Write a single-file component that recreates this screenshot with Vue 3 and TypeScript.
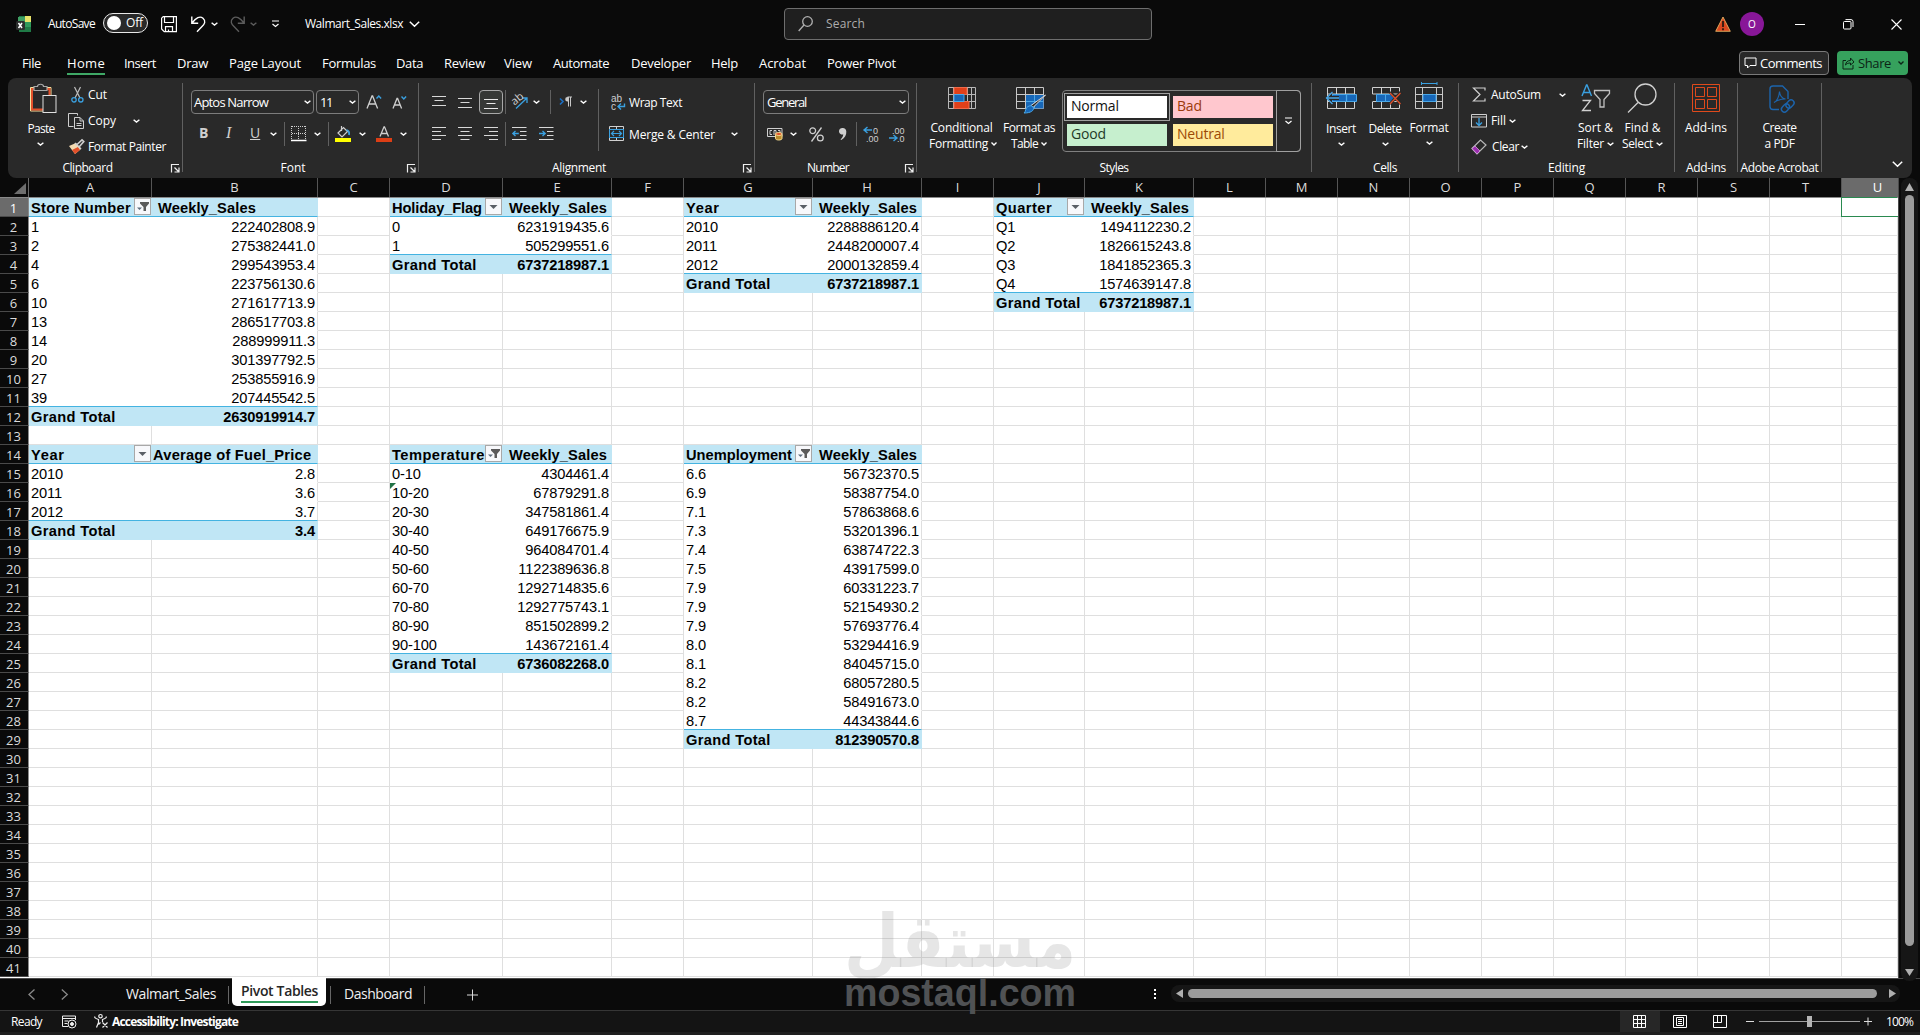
<script setup lang="ts">
import { h } from 'vue'

/* Spreads the letters of an element so that its text takes the given width. */
const vFit = {
  mounted(el: HTMLElement, binding: { value: number }) {
    const range = document.createRange()
    range.selectNodeContents(el)
    const natural = range.getBoundingClientRect().width
    const count = (el.textContent || '').length
    el.style.letterSpacing = `${(binding.value + 1 - natural) / count}px`
    el.style.width = `${binding.value + 1}px`
  },
}

const Chev = (props: { w?: number; c?: string }) => {
  const w = props.w ?? 7
  const d = w > 8 ? 'M.8 .8 5.5 5.3 10.2 .8' : w < 7 ? 'M.5 .6 3 3 5.5 .6' : 'M.6 .7 3.5 3.1 6.4 .7'
  return h('svg', { width: w > 8 ? 11 : w, height: w > 8 ? 7 : 4, style: 'display:block' }, [
    h('path', { d, fill: 'none', stroke: props.c ?? '#fff', 'stroke-width': w > 8 ? 1.5 : 1.4 }),
  ])
}
Chev.props = ['w', 'c']

const Launch = () =>
  h('svg', { width: 15, height: 9, style: 'display:block' }, [
    h('path', { d: 'M4.500 8.500V.5H12M7.500 3.500 11.500 7.500M12 3.500V8H7.500', fill: 'none', stroke: '#eee', 'stroke-width': 1.2 }),
  ])

const menu: [string, number, number][] = [
  ['File', 45, 18], ['Home', 57, 37], ['Insert', 53, 31], ['Draw', 52, 30], ['Page Layout', 93, 71],
  ['Formulas', 74, 53], ['Data', 48, 26], ['Review', 60, 40], ['View', 49, 27], ['Automate', 78, 55],
  ['Developer', 80, 59], ['Help', 48, 26], ['Acrobat', 68, 46], ['Power Pivot', 80, 68],
]

const colWidths = [123, 166, 72, 113, 109, 72, 129, 109, 72, 91, 109, 72, 72, 72, 72, 72, 72, 72, 72, 72, 56]
const cols = colWidths.map((w, i) => ({ w, name: String.fromCharCode(65 + i) }))

interface Pivot {
  col: number
  row: number
  head: string
  headW: number
  value: string
  valueW: number
  filtered: boolean
  rows: [string, string][]
  total: string
}
const WS = 'Weekly_Sales'
const pivots: Pivot[] = [
  { col: 0, row: 1, head: 'Store Number', headW: 97, value: WS, valueW: 95, filtered: true, total: '2630919914.7',
    rows: [['1', '222402808.9'], ['2', '275382441.0'], ['4', '299543953.4'], ['6', '223756130.6'], ['10', '271617713.9'],
      ['13', '286517703.8'], ['14', '288999911.3'], ['20', '301397792.5'], ['27', '253855916.9'], ['39', '207445542.5']] },
  { col: 3, row: 1, head: 'Holiday_Flag', headW: 87, value: WS, valueW: 95, filtered: false, total: '6737218987.1',
    rows: [['0', '6231919435.6'], ['1', '505299551.6']] },
  { col: 6, row: 1, head: 'Year', headW: 32, value: WS, valueW: 95, filtered: false, total: '6737218987.1',
    rows: [['2010', '2288886120.4'], ['2011', '2448200007.4'], ['2012', '2000132859.4']] },
  { col: 9, row: 1, head: 'Quarter', headW: 54, value: WS, valueW: 95, filtered: false, total: '6737218987.1',
    rows: [['Q1', '1494112230.2'], ['Q2', '1826615243.8'], ['Q3', '1841852365.3'], ['Q4', '1574639147.8']] },
  { col: 0, row: 14, head: 'Year', headW: 32, value: 'Average of Fuel_Price', valueW: 154, filtered: false, total: '3.4',
    rows: [['2010', '2.8'], ['2011', '3.6'], ['2012', '3.7']] },
  { col: 3, row: 14, head: 'Temperature', headW: 90, value: WS, valueW: 95, filtered: true, total: '6736082268.0',
    rows: [['0-10', '4304461.4'], ['10-20', '67879291.8'], ['20-30', '347581861.4'], ['30-40', '649176675.9'],
      ['40-50', '964084701.4'], ['50-60', '1122389636.8'], ['60-70', '1292714835.6'], ['70-80', '1292775743.1'],
      ['80-90', '851502899.2'], ['90-100', '143672161.4']] },
  { col: 6, row: 14, head: 'Unemployment', headW: 103, value: WS, valueW: 95, filtered: true, total: '812390570.8',
    rows: [['6.6', '56732370.5'], ['6.9', '58387754.0'], ['7.1', '57863868.6'], ['7.3', '53201396.1'], ['7.4', '63874722.3'],
      ['7.5', '43917599.0'], ['7.9', '60331223.7'], ['7.9', '52154930.2'], ['7.9', '57693776.4'], ['8.0', '53294416.9'],
      ['8.1', '84045715.0'], ['8.2', '68057280.5'], ['8.2', '58491673.0'], ['8.7', '44343844.6']] },
]

interface Cell { text: string; cls: string; fit?: number; button?: 'drop' | 'filter' }
const cells = new Map<string, Cell>()
for (const p of pivots) {
  cells.set(`${p.row}:${p.col}`, { text: p.head, cls: 'pv head', fit: p.headW, button: p.filtered ? 'filter' : 'drop' })
  cells.set(`${p.row}:${p.col + 1}`, { text: p.value, cls: p.value === WS ? 'pv head last value' : 'pv head last average', fit: p.valueW })
  p.rows.forEach(([a, b], i) => {
    const r = p.row + 1 + i
    const end = i === p.rows.length - 1 ? ' end' : ''
    const flag = a === '10-20' ? ' flag' : ''
    cells.set(`${r}:${p.col}`, { text: a, cls: 'pv' + end + flag })
    cells.set(`${r}:${p.col + 1}`, { text: b, cls: 'pv last num' + end })
  })
  const t = p.row + 1 + p.rows.length
  cells.set(`${t}:${p.col}`, { text: 'Grand Total', cls: 'pv total', fit: 82 })
  cells.set(`${t}:${p.col + 1}`, { text: p.total, cls: 'pv total last num' })
}
const at = (r: number, c: number) => cells.get(`${r}:${c}`)
</script>

<template>
  <div class="app">
    <header class="title">
      <svg width="17" height="17" viewBox="0 0 17 17">
        <path d="M3 0h12v16H3z" fill="#1f7a46" /><path d="M2 1h7v7H2z" fill="#3f9e63" /><path d="M9 0h6v6H9z" fill="#e8e36a" />
        <path d="M9 6h6v5H9z" fill="#2f9a5c" /><rect y="5" width="9" height="9" rx="1.5" fill="#2c2f2e" />
        <path d="M2.5 7 6 12M6 7 2.5 12" stroke="#fff" stroke-width="1.5" />
      </svg>
      <span v-fit="46" class="t s12">AutoSave</span>
      <div class="toggle"><i></i><span v-fit="16" class="t s12">Off</span></div>
      <svg width="17" height="17" fill="none" stroke="#fff" stroke-width="1.2"><path d="M.6 2.2.6 13l2.6 2.6h12.2V.6H2.2zM3.5.6v5.9h9V.6M4.5 15.6v-5h7v5M7.5 15.6v-2" /></svg>
      <svg width="16" height="17" fill="none" stroke="#fff" stroke-width="1.4"><path d="M.8.5v6.8h6.4M1 7C5 1.5 9-.3 12 2.2c3.4 3 1.4 6-1 8.4L6 15.8" /></svg>
      <Chev />
      <svg width="16" height="17" fill="none" stroke="#5c5c5c" stroke-width="1.4"><path d="M14.2.5v6.8H7.8M14 7C10 1.5 6-.3 3 2.2-.4 5.2 1.6 8.2 4 10.6l5 5.2" /></svg>
      <Chev c="#5c5c5c" />
      <svg width="9" height="8" fill="none" stroke="#fff" stroke-width="1.2"><path d="M1 1h7M1.5 4 4.5 6.5 7.5 4" /></svg>
      <span v-fit="97" class="t s12">Walmart_Sales.xlsx</span>
      <Chev :w="11" />
      <div class="search">
        <svg width="16" height="17" fill="none" stroke="#b0b0b0" stroke-width="1.3"><circle cx="9.5" cy="5.5" r="4.8" /><path d="M6 9 .7 15" /></svg>
        <span v-fit="38" class="t s12">Search</span>
      </div>
      <svg width="16" height="16"><path d="M8 1 15.3 15.3H.7z" fill="#d8481f" stroke="#f6c06a" stroke-width=".8" /><path d="M8 5v6M8 12.3v2" stroke="#2a1a10" stroke-width="1.8" /></svg>
      <div class="avatar">O</div>
      <svg width="11" height="11"><path d="M0 5.5h10" stroke="#fff" /></svg>
      <svg width="11" height="11" fill="none" stroke="#fff"><rect x=".5" y="2.5" width="7.5" height="7.5" rx="1" /><path d="M2.5 .6H8a2 2 0 0 1 2 2V8" /></svg>
      <svg width="11" height="11"><path d="M.5.5l10 10M10.5.5l-10 10" stroke="#fff" stroke-width="1.1" /></svg>
    </header>

    <nav class="menu">
      <div v-for="m in menu" :key="m[0]" class="mi" :class="{ on: m[0] === 'Home' }" :style="{ width: m[1] + 'px' }">
        <span v-fit="m[2]" class="t">{{ m[0] }}</span>
      </div>
      <div class="grow"></div>
      <button class="comments">
        <svg width="13" height="12" fill="none" stroke="#fff"><path d="M1 1h11v7.5H6L3.5 11V8.5H1z" /></svg>
        <span v-fit="61" class="t">Comments</span>
      </button>
      <button class="share">
        <svg width="13" height="13" fill="none" stroke="#0c2416"><path d="M4 3.500H1v8.500h10V8M3.500 8c.5-3 2-4.500 5-4.500V1l3.500 4-3.500 3V6C6 6 5 6.500 3.500 8z" /></svg>
        <span v-fit="32" class="t">Share</span>
        <Chev :w="6" c="#0c2416" />
      </button>
    </nav>

    <section class="ribbon">
      <!-- Clipboard -->
      <div class="group g-clip">
        <div class="body">
          <div class="big paste">
            <svg width="29" height="32" fill="none">
              <path d="M1.500 4.500h20.500v23.500H1.500z" stroke="#f7e3a0" /><path d="M3 6h17.500v20.500H3z" stroke="#e2502a" stroke-width="2" />
              <path d="M5 3.500h3.500c0-3 6-3 6 0H18v4H5z" fill="#292929" stroke="#a8a8a8" stroke-width="1.200" />
              <rect x="14" y="12.500" width="13" height="17" fill="#292929" stroke="#e0e0e0" />
            </svg>
            <span v-fit="26" class="t s12">Paste</span><Chev />
          </div>
          <div class="list">
            <div class="row26 cut">
              <svg width="13" height="16" fill="none"><path d="M3.500 0 9 11M9.500 0 4 11" stroke="#bdbdbd" stroke-width="1.200" /><circle cx="3" cy="12.800" r="2.200" stroke="#3aa0e0" stroke-width="1.300" /><circle cx="9.800" cy="12.800" r="2.200" stroke="#3aa0e0" stroke-width="1.300" /></svg>
              <span v-fit="18" class="t s12">Cut</span>
            </div>
            <div class="row26 copy">
              <svg width="17" height="17" fill="none" stroke="#d0d0d0"><path d="M5.500 13.500H.5V.5H9.500v2" /><path d="M6.500 4.500h5.500l3.500 3.500v7.500h-9zM12 4.500V8h3.500M8.500 10.500h5M8.500 12.500h5" /></svg>
              <span v-fit="27" class="t s12">Copy</span><Chev />
            </div>
            <div class="row26 copy">
              <svg width="17" height="16" fill="none"><path d="M1 7 8 4l5 6-6 5z" fill="#f3d9b0" /><path d="M4 11l6-3 2 3-5 4z" fill="#e2502a" /><path d="M7 4l6 6M8.500 6 14 .8l1.800 1.800L11 8" stroke="#cfcfcf" stroke-width="1.600" /></svg>
              <span v-fit="77" class="t s12">Format Painter</span>
            </div>
          </div>
        </div>
        <div class="cap"><span v-fit="49" class="t s12">Clipboard</span><Launch /></div>
      </div>
      <div class="sep"></div>

      <!-- Font -->
      <div class="group g-font">
        <div class="body col">
          <div class="row32 font1">
            <div class="box"><span v-fit="73" class="t">Aptos Narrow</span><Chev /></div>
            <div class="box"><span v-fit="11" class="t">11</span><Chev /></div>
            <svg width="16" height="16" fill="none"><path d="M1 14.500 6 2h.6l5 12.500M2.800 10h7" stroke="#cfcfcf" stroke-width="1.300" /><path d="M10.500 4.500 12.800 2l2.300 2.500" stroke="#3aa0e0" stroke-width="1.400" /></svg>
            <svg width="16" height="16" fill="none"><path d="M1 14.500 5 4.500h.6l4 10M2.500 11h5.600" stroke="#cfcfcf" stroke-width="1.300" /><path d="M9.500 2.500 11.800 5l2.300-2.500" stroke="#3aa0e0" stroke-width="1.400" /></svg>
          </div>
          <div class="row32 font2">
            <b class="bi">B</b><i class="bi it">I</i><u class="bi un">U</u><Chev />
            <div class="vs"></div>
            <svg width="16" height="16" fill="none" stroke="#d0d0d0"><path d="M1 .5h14M1 7.500h14M.5 0v14M7.500 0v14M14.500 0v14" stroke-dasharray="1 1" /><path d="M0 14.500h15.500" stroke="#fff" stroke-width="1.500" /></svg>
            <Chev />
            <div class="vs"></div>
            <svg width="17" height="17" fill="none"><path d="M3 7 8.500 1.500l4 4L7 11zM6.500 0v5" stroke="#cfcfcf" stroke-width="1.200" /><path d="M11.500 4c2 .5 3 2.500 2.500 5" stroke="#3aa0e0" stroke-width="1.800" /><path d="M0 12h16v4H0z" fill="#ffff00" /></svg>
            <Chev />
            <svg width="17" height="17" fill="none"><path d="M4 10.500 8 .8h.5l4 9.700M5.300 7.500h6" stroke="#cfcfcf" stroke-width="1.300" /><path d="M0 12h16v4H0z" fill="#dc3e15" /></svg>
            <Chev />
          </div>
        </div>
        <div class="cap"><span v-fit="24" class="t s12">Font</span><Launch /></div>
      </div>
      <div class="sep"></div>

      <!-- Alignment -->
      <div class="group g-align">
        <div class="body">
          <div class="alcol">
            <div class="row32 al1">
              <svg width="15" height="13" stroke="#d8d8d8"><path d="M0 .5h14M2.500 4.500h9M0 9.500h14" /></svg>
              <svg width="15" height="13" stroke="#d8d8d8"><path d="M0 2.500h14M2.500 6.500h9M0 11.500h14" /></svg>
              <div class="pressed"><svg width="15" height="13" stroke="#e8e8e8"><path d="M0 3.500h14M2.500 7.500h9M0 12.500h14" /></svg></div>
              <div class="vs"></div>
              <svg width="18" height="17" fill="none"><path d="M4 14.500 14.500 4.500M10 4h5v5" stroke="#3aa0e0" stroke-width="1.300" /><text x="0" y="9" transform="rotate(-40 5 7)" fill="#cfcfcf" font-family="Open Sans, sans-serif" font-size="11">ab</text></svg>
              <Chev />
              <div class="vs"></div>
              <svg width="14" height="12" fill="none"><path d="M1 2.500 4 5.500 1 8.500" stroke="#1b6fc4" stroke-width="1.600" /><path d="M9.500 10.500V1M11.500 10.500V1M13 1H8.500" stroke="#c8c8c8" /><path d="M9.500 1H8.500a2.300 2.300 0 0 0 0 4.600h1z" fill="#c8c8c8" /></svg>
              <Chev />
            </div>
            <div class="row32 al2">
              <svg width="15" height="14" stroke="#d8d8d8"><path d="M0 .5h14M0 4.500h9M0 8.500h14M0 12.500h9" /></svg>
              <svg width="15" height="14" stroke="#d8d8d8"><path d="M0 .5h14M2.500 4.500h9M0 8.500h14M2.500 12.500h9" /></svg>
              <svg width="15" height="14" stroke="#d8d8d8"><path d="M0 .5h14M5 4.500h9M0 8.500h14M5 12.500h9" /></svg>
              <div class="vs"></div>
              <svg width="16" height="14" fill="none" stroke="#d8d8d8"><path d="M0 .5h14.500M8 4.500h6.500M8 8.500h6.500M0 12.500h14.500" /><path d="M.8 6.500h6M3.500 4 .8 6.500l2.700 2.500" stroke="#3aa0e0" stroke-width="1.300" /></svg>
              <svg width="16" height="14" fill="none" stroke="#d8d8d8"><path d="M0 .5h14.500M8 4.500h6.500M8 8.500h6.500M0 12.500h14.500" /><path d="M0 6.500h6M3.500 4 6.200 6.500 3.500 9" stroke="#3aa0e0" stroke-width="1.300" /></svg>
            </div>
          </div>
          <div class="tallsep"></div>
          <div class="alcol">
            <div class="row32 wrap">
              <svg class="wr" width="16" height="17" fill="none"><text x="0" y="7.500" fill="#cfcfcf" font-family="Liberation Sans, sans-serif" font-size="10">ab</text><text x="0" y="16" fill="#cfcfcf" font-family="Liberation Sans, sans-serif" font-size="10">c</text><path d="M13.500 9.500v3H7.500M10 9.500 7 12.500l3 3" stroke="#3aa0e0" stroke-width="1.400" /></svg>
              <span v-fit="52" class="t s12">Wrap Text</span>
            </div>
            <div class="row32 wrap">
              <svg width="16" height="16" fill="none"><path d="M.5.5h14v14H.5zM7.500 0v4M7.500 11v4" stroke="#d0d0d0" /><rect x=".5" y="3.500" width="14" height="8" stroke="#3aa0e0" fill="#292929" /><path d="M2.500 7.500h10M5 5 2.500 7.500 5 10M10 5l2.500 2.500L10 10" stroke="#3aa0e0" stroke-width="1.200" /></svg>
              <span v-fit="85" class="t s12">Merge &amp; Center</span><Chev />
            </div>
          </div>
        </div>
        <div class="cap"><span v-fit="53" class="t s12">Alignment</span><Launch /></div>
      </div>
      <div class="sep"></div>

      <!-- Number -->
      <div class="group g-num">
        <div class="body col">
          <div class="row32"><div class="box gen"><span v-fit="38" class="t">General</span><Chev /></div></div>
          <div class="row32 num2">
            <svg width="17" height="14" fill="none"><path d="M.5 1.500h14.500v8H.5z" stroke="#cfcfcf" /><path d="M5 3.500H3v4h2M7 8V3.500h2V8M11 3.500h2V6" stroke="#cfcfcf" /><path d="M8.500 7.500v4c0 2 6.500 2 6.500 0v-4" fill="#b98a2c" stroke="#f5dd90" /><ellipse cx="11.800" cy="7" rx="3.300" ry="1.500" fill="#e2502a" stroke="#f5dd90" /></svg>
            <Chev />
            <svg width="16" height="15" fill="none" stroke="#cfcfcf" stroke-width="1.300"><circle cx="3.700" cy="3.700" r="2.900" /><circle cx="11.300" cy="11" r="2.900" /><path d="M12.500.5 2.500 14.500" /></svg>
            <svg width="9" height="14"><path d="M3.800 1A3.300 3.300 0 1 0 4.300 7.400C4 9.500 3 11 1.500 12.300L2.300 13C6 10.800 7.500 8 7.300 4.500 7.200 2.300 5.800 1 3.800 1z" fill="#cfcfcf" /></svg>
            <div class="vs"></div>
            <svg width="17" height="16" fill="none"><path d="M1 4h8M4.500 1 1 4l3.500 3" stroke="#3aa0e0" stroke-width="1.400" /><text x="10" y="7.500" class="dec">0</text><text x="3" y="15.500" class="dec">.00</text></svg>
            <svg width="17" height="16" fill="none"><path d="M0 12h8M4.500 9 8 12l-3.500 3" stroke="#3aa0e0" stroke-width="1.400" /><text x="3" y="7.500" class="dec">.00</text><text x="8" y="15.500" class="dec">.0</text></svg>
          </div>
        </div>
        <div class="cap"><span v-fit="41" class="t s12">Number</span><Launch /></div>
      </div>
      <div class="sep"></div>

      <!-- Styles -->
      <div class="group g-styles">
        <div class="body">
          <div class="big cond">
            <svg width="28" height="28" fill="none"><path d="M.5 5.500h27v21H.5zM0 12.500h28M0 19.500h28M5.500 5v22M19.500 5v22M23.500 5v22" stroke="#b8b8b8" /><path d="M6 5.500h13v7H6zM6 19.500h15v7H6z" fill="#e0401a" stroke="#f06a4a" /><path d="M6 12.500h10v7H6z" fill="#1767b8" stroke="#4aa8e8" /></svg>
            <span v-fit="61" class="t s12">Conditional</span>
            <div class="l2"><span v-fit="58" class="t s12">Formatting</span><Chev :w="6" /></div>
          </div>
          <div class="big fat">
            <svg width="31" height="34" fill="none"><path d="M.5 5.500h27v21H.5zM0 12.500h28M0 19.500h28M9.500 5v22M18.500 5v22" stroke="#c8c8c8" /><path d="M10 13h17.500v13.500H10z" fill="#1767b8" /><path d="M10 19.500h17M18.500 13v13" stroke="#4aa8e8" /><path d="M29.500 13 17 25.500l-2-2z" fill="#292929" stroke="#d8d8d8" /><path d="M16 24c3 2 2 7-8 7 2-1 1-5 4-6.500 1.500-.8 3-.8 4-.5z" fill="#1767b8" stroke="#4aa8e8" /></svg>
            <span v-fit="51" class="t s12">Format as</span>
            <div class="l2"><span v-fit="26" class="t s12">Table</span><Chev :w="6" /></div>
          </div>
          <div class="gallery">
            <div class="sw-grid">
              <div class="sel"><div class="sw normal">Normal</div></div>
              <div class="sw bad">Bad</div>
              <div class="sw good">Good</div>
              <div class="sw neutral">Neutral</div>
            </div>
            <div class="more"><svg width="9" height="8" fill="none" stroke="#fff" stroke-width="1.200"><path d="M1 1h7M1.500 4 4.500 6.500 7.500 4" /></svg></div>
          </div>
        </div>
        <div class="cap"><span v-fit="28" class="t s12">Styles</span></div>
      </div>
      <div class="sep"></div>

      <!-- Cells -->
      <div class="group g-cells">
        <div class="body">
          <div class="big ins">
            <svg width="33" height="28" fill="none"><path d="M2.500 5.500h27v21h-27zM2 12h28M2 19.500h28M11.500 5v22M20.500 5v22" stroke="#d0d0d0" /><path d="M7 12.500h24.500v7H7z" fill="#1767b8" stroke="#4aa8e8" /><path d="M14 14H7v-4L.8 16 7 22v-4h7" fill="#292929" /><path d="M14 16H1.500M7.500 10 1.500 16l6 6M21.500 13v7" stroke="#4aa8e8" stroke-width="1.300" /></svg>
            <span v-fit="29" class="t s12">Insert</span><Chev />
          </div>
          <div class="big del">
            <svg width="31" height="28" fill="none"><path d="M2.500 12V5.500h27V12M2.500 20v6.500h27V20M11.500 5v7M20.500 5v7M11.500 20v7M20.500 20v7M2.500 12h27M2.500 19.500h27" stroke="#d0d0d0" /><path d="M6.500 12.500h14l4 3.500-4 3.500h-14z" fill="#1767b8" stroke="#4aa8e8" /><path d="M15.500 12v8" stroke="#4aa8e8" /><path d="M20 10l11 12M31 10 20 22" stroke="#292929" stroke-width="3" /><path d="M20 11l10.500 11M30.500 11 20 22" stroke="#e0502a" stroke-width="1.300" /></svg>
            <span v-fit="32" class="t s12">Delete</span><Chev />
          </div>
          <div class="big fmt">
            <svg width="29" height="28" fill="none"><path d="M.5 5.500h27v21H.5zM0 12.500h28M0 19.500h28M7.500 5v22M21.500 5v22" stroke="#c8c8c8" /><path d="M8 12.500h13v7H8z" fill="#1767b8" stroke="#4aa8e8" /><path d="M6.500 0v3M22 0v3M6.500 1.500H22" stroke="#3aa0e0" /></svg>
            <span v-fit="38" class="t s12">Format</span><Chev />
          </div>
        </div>
        <div class="cap"><span v-fit="23" class="t s12">Cells</span></div>
      </div>
      <div class="sep"></div>

      <!-- Editing -->
      <div class="group g-edit">
        <div class="body">
          <div class="list ed">
            <div class="row26 e1">
              <svg width="16" height="16" fill="none" stroke="#cfcfcf" stroke-width="1.200"><path d="M14 3.500V1H2.500L9 7.500 2.500 14H14v-2.500" /></svg>
              <span v-fit="49" class="t s12">AutoSum</span><Chev />
            </div>
            <div class="row26 e2">
              <svg width="16" height="14" fill="none"><path d="M.5 13V.5h15V13zM.5 3h15" stroke="#cfcfcf" /><path d="M8 4v7M5 8.500l3 3 3-3" stroke="#3aa0e0" stroke-width="1.300" /></svg>
              <span v-fit="14" class="t s12">Fill</span><Chev />
            </div>
            <div class="row26 e3">
              <svg width="16" height="16" fill="none"><path d="M1 9.500 9.500 1 15 6 6 15z" stroke="#b8b8b8" stroke-width="1.200" /><path d="M1 9.500 4 7l5 5-3 3z" fill="#9c2fb0" stroke="#d0a0d8" stroke-width=".8" /></svg>
              <span v-fit="26" class="t s12">Clear</span><Chev />
            </div>
          </div>
          <div class="big sort">
            <svg width="30" height="32" fill="none"><path d="M1 14 5.500 3h.5l4.500 11M2.500 10.500h6.500" stroke="#3aa0e0" stroke-width="1.400" /><path d="M1.500 18.500h8L1.500 28.500h8.500" stroke="#d0d0d0" stroke-width="1.300" /><path d="M13.500 8.500h15v3l-5.500 6v7.500h-4V17.500l-5.500-6z" stroke="#c0c0c0" stroke-width="1.300" /></svg>
            <span v-fit="34" class="t s12">Sort &amp;</span>
            <div class="l2"><span v-fit="26" class="t s12">Filter</span><Chev /></div>
          </div>
          <div class="big find">
            <svg width="31" height="32" fill="none" stroke="#d0d0d0" stroke-width="1.300"><circle cx="18.500" cy="12.500" r="10.500" /><path d="M11 20.500 1 30.500" /></svg>
            <span v-fit="35" class="t s12">Find &amp;</span>
            <div class="l2"><span v-fit="30" class="t s12">Select</span><Chev /></div>
          </div>
        </div>
        <div class="cap"><span v-fit="36" class="t s12">Editing</span></div>
      </div>
      <div class="sep"></div>

      <!-- Add-ins -->
      <div class="group g-add">
        <div class="body">
          <div class="big">
            <svg width="28" height="32" fill="none" stroke="#e04a1c"><path d="M.5 2.500h27v27H.5zM3.500 5.500h9v9h-9zM15.500 5.500h9v9h-9zM3.500 17.500h9v9h-9zM15.500 17.500h9v9h-9z" /></svg>
            <span v-fit="41" class="t s12">Add-ins</span>
          </div>
        </div>
        <div class="cap"><span v-fit="39" class="t s12">Add-ins</span></div>
      </div>
      <div class="sep"></div>

      <!-- Adobe Acrobat -->
      <div class="group g-pdf">
        <div class="body">
          <div class="big">
            <svg class="pdf" width="26" height="34" fill="none" stroke="#1c64ac" stroke-width="1.400"><path d="M10 27.500H4a3 3 0 0 1-3-3V7a3 3 0 0 1 3-3h9.500L19 9.500V17M13.500 4l5.500 5.500" /><path d="M5 20.500c3-1.500 5-6 5.500-11 .5 5 3 7 6 7.500-4 0-8 1-11.500 3.500z" stroke-width="1.100" /><rect x="18" y="17.500" width="6" height="9" rx="3" transform="rotate(45 21 22)" /><rect x="13.500" y="21.500" width="6" height="9" rx="3" transform="rotate(45 16.500 26)" /></svg>
            <span v-fit="33" class="t s12">Create</span>
            <span v-fit="29" class="t s12">a PDF</span>
          </div>
        </div>
        <div class="cap"><span v-fit="77" class="t s12">Adobe Acrobat</span></div>
      </div>
      <div class="sep"></div>
      <div class="collapse"><Chev :w="11" /></div>
    </section>

    <main class="work">
      <div class="sheet">
        <div class="colhead">
          <div class="corner"><svg width="12" height="11"><path d="M12 0v11H0z" fill="#6e6e6e" /></svg></div>
          <div v-for="c in cols" :key="c.name" class="ch" :class="{ on: c.name === 'U' }" :style="{ width: c.w + 'px' }"><span>{{ c.name }}</span></div>
        </div>
        <div v-for="r in 41" :key="r" class="line">
          <div class="rh" :class="{ on: r === 1 }">{{ r }}</div>
          <div v-for="(c, i) in cols" :key="c.name" class="cell" :class="[at(r, i)?.cls, { active: r === 1 && i === 20 }]" :style="{ width: c.w + 'px' }">
            <template v-if="at(r, i)">
              <span v-if="at(r, i)!.fit" v-fit="at(r, i)!.fit!">{{ at(r, i)!.text }}</span>
              <span v-else>{{ at(r, i)!.text }}</span>
              <div v-if="at(r, i)!.button" class="fb">
                <svg v-if="at(r, i)!.button === 'drop'" width="15" height="15"><path d="M3.500 6h8l-4 4z" fill="#5a5f66" /></svg>
                <svg v-else width="15" height="15"><path d="M5 3h9v1.500L11 8v4H8.500V8L5 4.500z" fill="#5a5a5a" /><path d="M2 8.500h5L4.500 11z" fill="#5d6b7c" /></svg>
              </div>
            </template>
          </div>
        </div>
      </div>
      <div class="vbar">
        <div class="vtrack">
          <svg width="9" height="8"><path d="M4.500 0 9 8H0z" fill="#b0b0b0" /></svg>
          <div class="vthumb"></div>
          <svg width="9" height="7"><path d="M0 0h9L4.500 7z" fill="#b0b0b0" /></svg>
        </div>
      </div>
    </main>

    <div class="tabs">
      <svg width="8" height="11"><path d="M6.500.5 1 5.500l5.500 5" fill="none" stroke="#8a8a8a" stroke-width="1.300" /></svg>
      <svg width="8" height="11"><path d="M.8.5l5.500 5-5.500 5" fill="none" stroke="#8a8a8a" stroke-width="1.300" /></svg>
      <span v-fit="89" class="t s14">Walmart_Sales</span>
      <i class="ts"></i>
      <div class="tab"><span v-fit="76" class="t s14">Pivot Tables</span></div>
      <i class="ts"></i>
      <span v-fit="67" class="t s14">Dashboard</span>
      <i class="ts"></i>
      <svg width="12" height="12"><path d="M5.500.5v11M0 6h11" stroke="#d8d8d8" /></svg>
      <svg width="3" height="11" fill="#fff"><path d="M0 0h2v2H0zM0 4h2v2H0zM0 8h2v2H0z" /></svg>
      <div class="hbar">
        <svg width="7" height="9"><path d="M7 0v9L0 4.500z" fill="#b0b0b0" /></svg>
        <div class="hthumb"></div>
        <svg width="7" height="9"><path d="M0 0v9l7-4.500z" fill="#b0b0b0" /></svg>
      </div>
    </div>

    <footer class="status">
      <span v-fit="30" class="t s12">Ready</span>
      <svg width="16" height="14" fill="none" stroke="#eee"><path d="M6 11.500H.5V1h13v4M.5 3.500h13M2.500 6h4M2.500 8.500h3" /><circle cx="10" cy="9" r="4" /><circle cx="10" cy="9" r="1.500" fill="#eee" /></svg>
      <svg width="15" height="15" fill="none" stroke="#eee" stroke-width="1.200"><circle cx="6.500" cy="2.200" r="1.700" /><path d="M1 2.500c-.8 1 0 1.600 3.500 3v3L2.500 13.500M12 2.500c.8 1 0 1.600-3.500 3V8M4.500 10.500l2-2M8.500 8.500l5 5M13.500 8.500l-5 5" /></svg>
      <span v-fit="125" class="t s12 bold">Accessibility: Investigate</span>
      <div class="view"><svg width="14" height="14" fill="none" stroke="#fff"><path d="M.5.500h12v12H.5zM4.500 0v13M8.500 0v13M0 4.500h13M0 8.500h13" /></svg></div>
      <svg width="14" height="14" fill="none" stroke="#fff"><path d="M.5.500h13v12H.5zM3.500 2.500h7v8h-7zM5 4.500h4M5 6.500h4M5 8.500h4" /></svg>
      <svg width="14" height="14" fill="none" stroke="#fff"><path d="M.5.500h13v12H.5zM4.500 0v7.500M8.500 0v7.500H0" /></svg>
      <svg width="9" height="9"><path d="M0 4.500h8" stroke="#ddd" /></svg>
      <div class="slider"><i></i></div>
      <svg width="9" height="9"><path d="M0 4.500h8M4 .5v8" stroke="#ddd" /></svg>
      <span v-fit="26" class="t s12">100%</span>
    </footer>

    <svg class="mark" width="240" height="120" viewBox="0 0 240 120">
      <text x="3" y="67" class="mark-ar" textLength="232" lengthAdjust="spacingAndGlyphs" direction="rtl" text-anchor="end">مستقل</text>
      <text x="3" y="106" class="mark-en" textLength="232" lengthAdjust="spacingAndGlyphs">mostaql.com</text>
    </svg>
  </div>
</template>

<style>
html, body { background: #0a0a0a; overflow: hidden; }
</style>

<style scoped>
* { box-sizing: border-box; }
.app { position: relative; width: 1920px; height: 1035px; display: flex; flex-direction: column; overflow: hidden; background: #0a0a0a; color: #fff; font-family: 'Open Sans', 'Noto Sans', sans-serif; font-size: 13px; }
.app svg { display: block; flex: none; overflow: visible; }
.t { display: block; flex: none; white-space: nowrap; line-height: 16px; }
.s12 { font-size: 12px; }
.s14 { font-size: 14px; }
.bold { font-weight: 700; }
.grow { flex: 1; }

.title { height: 48px; display: grid; align-items: center; padding-left: 16px; grid-template-columns: 32px 55px 58px 30px 20px 19px 20px 21px 34px 104px 375px 931px 25px 55px 48px 48px 20px; }
.toggle { width: 45px; height: 20px; border: 1px solid #e8e8e8; border-radius: 10px; background: #292929; display: flex; align-items: center; padding-left: 3px; gap: 5px; margin-bottom: 2px; }
.toggle i { width: 14px; height: 14px; border-radius: 50%; background: #fff; flex: none; }
.search { width: 368px; height: 32px; border: 1px solid #6e6e6e; border-radius: 4px; background: #1f1f1f; display: grid; grid-template-columns: 28px 1fr; align-items: center; padding-left: 13px; color: #adadad; }
.avatar { width: 24px; height: 24px; border-radius: 50%; background: #881798; font-size: 10px; text-align: center; line-height: 24px; }

.menu { height: 30px; display: flex; padding-left: 22px; }
.mi { flex: none; height: 27px; display: flex; flex-direction: column; padding-top: 7px; }
.mi.on::after { content: ''; width: 38px; height: 2px; background: #3fa866; margin-top: 2px; }
.menu button { font: inherit; height: 24px; margin-top: 3px; border-radius: 4px; display: grid; align-items: center; text-align: left; }
.menu .comments { width: 90px; border: 1px solid #7a7a7a; background: #292929; color: #fff; grid-template-columns: 16px 1fr; padding: 0 0 0 4px; margin-right: 8px; }
.menu .share { width: 71px; border: 0; background: #36a15d; color: #0c2416; grid-template-columns: 16px 40px 1fr; padding: 0 0 0 5px; margin-right: 12px; }

.ribbon { flex: none; height: 100px; margin: 0 8px; background: #292929; border-radius: 8px; display: flex; }
.group { flex: none; display: flex; flex-direction: column; }
.sep { width: 1px; flex: none; margin: 5px 0 6px; background: #606060; }
.body { height: 82px; display: flex; padding-top: 4px; }
.body.col { flex-direction: column; }
.body.col, .alcol { padding-top: 8px; }
.alcol { margin-top: -4px; }
.cap { height: 16px; display: flex; }
.cap > .t { margin: 0 auto; }
.cap > svg { margin-top: 4px; }
.g-clip { width: 174px; }
.g-font { width: 235px; }
.g-align { width: 335px; }
.g-num { width: 161px; }
.g-styles { width: 394px; }
.g-cells { width: 146px; }
.g-edit { width: 215px; }
.g-add { width: 62px; }
.g-pdf { width: 83px; }
.row26 { height: 26px; display: grid; align-items: center; }
.row32 { height: 32px; display: grid; align-items: center; }
.big { display: flex; flex-direction: column; align-items: center; flex: none; }
.big > svg:first-child { height: 34px; margin-bottom: 4px; }
.big > svg:last-child { margin-top: 5px; }
.l2 { display: flex; align-items: center; gap: 3px; height: 16px; }
.paste { width: 60px; padding-top: 1px; }
.paste > svg:first-child { margin-left: 11px; }
.paste > .t { margin-left: 6px; }
.paste > svg:last-child { margin-left: 4px; }
.cut { grid-template-columns: 17px 1fr; padding-left: 3px; }
.copy { grid-template-columns: 20px 45px 1fr; }

.box { height: 24px; border: 1px solid #7c7c7c; border-radius: 4px; background: #292929; display: flex; align-items: center; justify-content: space-between; padding: 0 2px; }
.font1 { grid-template-columns: 123px 43px 26px 16px; padding-left: 8px; }
.font1 .box:nth-child(2) { margin-left: 2px; width: 43px; padding-left: 3px; }
.font1 svg { margin-left: 9px; }
.font1 .box svg { margin: 0; }
.font2 { grid-template-columns: 27px 24px 20px 14px 7px 23px 14px 7px 24px 17px 24px 1fr; padding-left: 16px; }
.bi { font-size: 14px; line-height: 16px; color: #cfcfcf; margin-top: -2px; }
.it { font-family: 'Liberation Serif', serif; font-size: 16px; }
.un { font-weight: 400; }
.vs { width: 1px; height: 24px; background: #606060; }
.tallsep { width: 1px; height: 62px; margin-top: 7px; background: #606060; }
.al1, .al2 { padding-left: 13px; width: 179px; }
.al1 { grid-template-columns: 26px 21px 26px 7px 21px 17px 9px 21px 1fr; }
.al2 { grid-template-columns: 26px 26px 21px 7px 27px 1fr; }
.pressed { width: 24px; height: 24px; border: 1px solid #a8a8a8; border-radius: 4px; background: #363836; display: grid; place-items: center; }
.wrap { grid-template-columns: 20px 102px 1fr; padding-left: 10px; }
.wrap .t { margin-top: 1px; }
.wr { margin-left: 2px; }
.gen { width: 146px; margin-left: 8px; padding-left: 3px; }
.num2 { grid-template-columns: 23px 19px 30px 17px 7px 26px 1fr; padding-left: 12px; }
.dec { fill: #cfcfcf; font-family: 'Liberation Sans', sans-serif; font-size: 9px; }

.cond { width: 77px; margin-left: 8px; padding-right: 4px; }
.cond > svg:first-child { margin-left: 1px; }
.cond .l2 { margin-left: 3px; }
.fat { width: 60px; margin-left: -3px; }
.fat > svg:first-child { margin-left: 4px; }
.gallery { width: 239px; height: 62px; margin: 8px 0 0 3px; border: 1px solid #808080; border-radius: 4px; display: flex; }
.sw-grid { width: 214px; display: grid; grid-template-columns: 106px 100px; grid-template-rows: 28px 28px; padding: 2px 0 0 1px; align-items: center; }
.sel { border: 1px solid #a0a0a0; height: 28px; padding: 2px; }
.sw { width: 100px; height: 22px; font-size: 14px; line-height: 20px; padding-left: 4px; letter-spacing: -.2px; }
.normal { background: #fff; color: #111; }
.bad { background: #ffc7ce; color: #9c3a0c; }
.bad, .neutral { margin-left: 3px; }
.good { background: #c6efce; color: #1f3a28; margin-left: 3px; }
.neutral { background: #ffeb9c; color: #9c4a06; }
.more { flex: 1; border: 1px solid #a0a0a0; margin: -1px; border-radius: 0 4px 4px 0; display: grid; place-items: center; }

.ins { width: 44px; margin-left: 7px; }
.del { width: 44px; }
.fmt { width: 44px; }
.ins > .t, .del > .t { margin-top: 1px; }
.ed { width: 112px; padding-left: 12px; }
.e1 { grid-template-columns: 20px 68px 1fr; }
.e2 { grid-template-columns: 20px 18px 1fr; }
.e3 { grid-template-columns: 21px 29px 1fr; }
.sort { width: 49px; }
.find { width: 45px; }
.g-add .body, .g-pdf .body { justify-content: center; }
.pdf { margin-left: 5px; }
.collapse { flex: 1; display: flex; justify-content: flex-end; padding: 83px 9px 0 0; }

.work { flex: none; height: 801px; display: flex; border-bottom: 1px solid #4a4a4a; }
.sheet { width: 1899px; height: 800px; overflow: hidden; background: #fff; border-right: 1px solid #4a4a4a; flex: none; }
.colhead { height: 20px; display: flex; background: #0a0a0a; border-bottom: 1px solid #8a8a8a; color: #dcdcdc; }
.corner { width: 29px; flex: none; border-right: 1px solid #6a6a6a; padding: 5px 0 0 14px; }
.ch { flex: none; height: 19px; line-height: 19px; text-align: center; border-right: 1px solid #555; font-size: 13px; overflow: hidden; }
.ch.on { background: #6b6b6b; color: #fff; border: 0; }
.ch.on span { display: block; width: 71px; }
.line { height: 19px; display: flex; }
.rh { width: 29px; height: 19px; flex: none; background: #0a0a0a; color: #dcdcdc; border-right: 1px solid #8a8a8a; border-bottom: 1px solid #4a4a4a; text-align: center; font-size: 13px; line-height: 20px; padding-right: 1px; }
.rh.on { background: #6b6b6b; color: #fff; }
.cell { flex: none; height: 19px; border-right: 1px solid #dfdfdf; border-bottom: 1px solid #dfdfdf; position: relative; font-family: 'Liberation Sans', Arial, sans-serif; font-size: 14.67px; line-height: 20px; color: #000; padding-left: 2px; white-space: nowrap; }
.cell > span { display: block; letter-spacing: -.16px; }
.pv { border-right: 0; border-bottom-color: #fff; }
.pv.last { border-right: 1px solid #dfdfdf; }
.pv.num { text-align: right; padding: 0 2px 0 0; }
.pv.end { border-bottom-color: #44b3e1; }
.pv.head, .pv.total { background: #c0e6f5; font-weight: 700; border-color: #c0e6f5; }
.pv.head { border-bottom-color: #44b3e1; }
.pv.value { padding-left: 6px; }
.pv.average { padding-left: 1px; }
.flag::before { content: ''; position: absolute; left: 0; top: 0; border-top: 6px solid #217346; border-right: 6px solid transparent; }
.fb { position: absolute; right: 1px; top: 0; width: 17px; height: 17px; border: 1px solid #a8a8a8; background: #f7f8fb; }
.cell.active { box-shadow: -1px 0 0 0 #2a8a50, -1px -1px 0 0 #2a8a50; border-bottom: 1px solid #2a8a50; border-right: 0; z-index: 2; }

.vbar { flex: 1; padding: 0 2px; }
.vtrack { height: 803px; background: #161616; border-radius: 8px; display: flex; flex-direction: column; align-items: center; padding: 5px 0; position: relative; z-index: 1; }
.vthumb { width: 9px; height: 751px; margin: 4px 0 23px; border-radius: 5px; background: #9c9c9c; }

.tabs { flex: none; height: 31px; padding-left: 28px; display: grid; align-items: center; grid-template-columns: 33px 65px 102px 4px 98px 14px 80px 43px 687px 17px 729px; color: #f0f0f0; }
.tabs > .t { margin-bottom: 2px; }
.ts { width: 1px; height: 18px; background: #666; }
.tab { align-self: start; width: 94px; height: 28px; margin-top: -1px; background: #fff; border-radius: 0 0 5px 5px; color: #262626; padding: 5px 0 0 9px; font-weight: 600; }
.tab::after { content: ''; display: block; width: 77px; height: 2px; margin-top: 2px; background: #2f9a58; }
.hbar { height: 17px; background: #161616; border-radius: 8px; display: flex; align-items: center; padding-left: 5px; margin-bottom: 2px; }
.hthumb { width: 689px; height: 9px; margin: 0 12px 0 5px; border-radius: 5px; background: #9c9c9c; }

.status { flex: none; height: 25px; background: #141414; border-top: 1px solid #363636; border-bottom: 3px solid #1f1f1f; display: grid; align-items: center; padding-left: 11px; grid-template-columns: 51px 32px 18px 1508px 53px 40px 33px 13px 105px 22px 30px; }
.view { width: 40px; height: 21px; background: #272727; display: grid; place-items: center; }
.slider { width: 101px; height: 11px; display: flex; justify-content: center; background: linear-gradient(#a0a0a0, #a0a0a0) 0 5px / 100% 1px no-repeat; }
.slider i { width: 5px; height: 11px; background: #b4b4b4; }

.mark { position: absolute; left: 841px; top: 900px; z-index: 5; pointer-events: none; }
.mark-ar { font-family: 'DejaVu Sans', sans-serif; font-weight: 700; font-size: 74px; fill: rgba(128, 128, 128, .2); }
.mark-en { font-family: 'Liberation Sans', Arial, sans-serif; font-weight: 700; font-size: 38px; fill: #505254; }
</style>
